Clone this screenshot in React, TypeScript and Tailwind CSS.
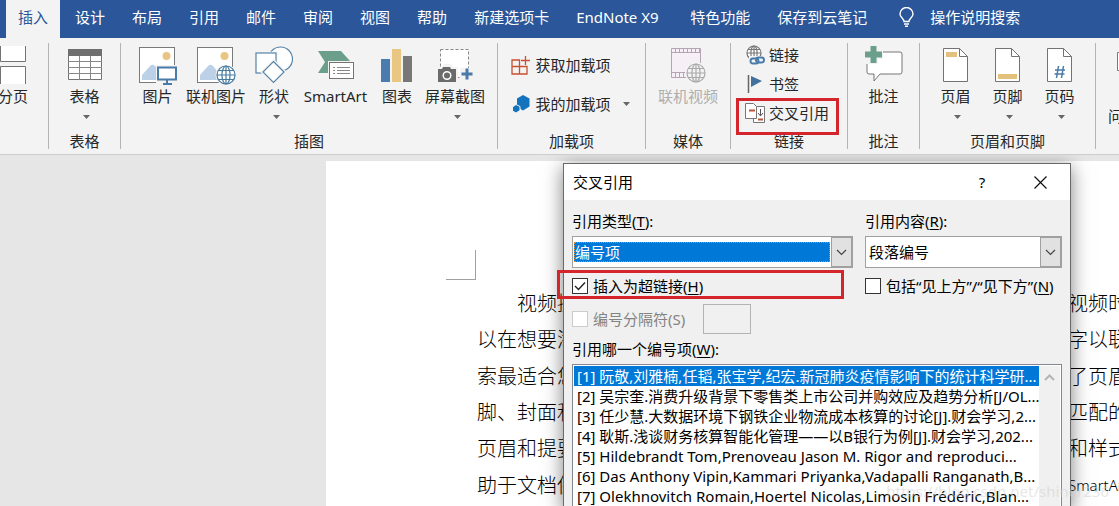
import type { ReactNode } from "react"

const tabs = ["设计", "布局", "引用", "邮件", "审阅", "视图", "帮助", "新建选项卡", "EndNote X9", "特色功能", "保存到云笔记"]

const entries = [
  "[1] 阮敬,刘雅楠,任韬,张宝学,纪宏.新冠肺炎疫情影响下的统计科学研...",
  "[2] 吴宗奎.消费升级背景下零售类上市公司并购效应及趋势分析[J/OL...",
  "[3] 任少慧.大数据环境下钢铁企业物流成本核算的讨论[J].财会学习,2...",
  "[4] 耿斯.浅谈财务核算智能化管理——以B银行为例[J].财会学习,202...",
  "[5] Hildebrandt Tom,Prenoveau Jason M. Rigor and reproduci...",
  "[6] Das Anthony Vipin,Kammari Priyanka,Vadapalli Ranganath,B...",
  "[7] Olekhnovitch Romain,Hoertel Nicolas,Limosin Frédéric,Blan...",
]

// Each line is split where the dialog covers it
const lines = [
  ["视频提", "视频时"],
  ["以在想要添", "字以联"],
  ["索最适合您", "了页眉"],
  ["脚、封面和", "匹配的"],
  ["页眉和提要", "和样式"],
  ["助于文档保", "SmartArt"],
]

function Caret() {
  return (
    <svg width="7" height="4" viewBox="0 0 7 4" className="shrink-0">
      <path d="M0 0h7L3.500 4z" fill="#666" />
    </svg>
  )
}

function Chevron({ up, color = "#444" }: { up?: boolean; color?: string }) {
  return (
    <svg width="11" height="7" viewBox="0 0 11 7" fill="none" stroke={color} strokeWidth={up ? 2 : 1.2}>
      <path d={up ? "M1 6l4.500-4.500L10 6" : "M1 1l4.500 4.500L10 1"} />
    </svg>
  )
}

function Group({ label, className, children }: { label: string; className: string; children: ReactNode }) {
  return (
    <section className={`flex shrink-0 flex-col justify-between border-r border-[#b4b4b4] ${className}`}>
      <div className="flex justify-center">{children}</div>
      <h2 className="text-center leading-4">{label}</h2>
    </section>
  )
}

function BigButton({ label, icon, caret, className = "" }: { label: string; icon: ReactNode; caret?: boolean; className?: string }) {
  return (
    <button className={`flex shrink-0 flex-col items-center whitespace-nowrap ${className}`}>
      <span className="flex h-11 items-center justify-center">{icon}</span>
      <span className="leading-[18px]">{label}</span>
      {caret && <span className="mt-2 flex h-2 items-center pl-1"><Caret /></span>}
    </button>
  )
}

function SmallButton({ label, icon, caret }: { label: string; icon: ReactNode; caret?: boolean }) {
  return (
    <button className="flex items-center gap-1 whitespace-nowrap leading-5">
      <span className="flex h-5 w-5 items-center justify-center">{icon}</span>
      {label}
      {caret && <span className="ml-2"><Caret /></span>}
    </button>
  )
}

function Globe({ x, y, r, color, fill = "#fff" }: { x: number; y: number; r: number; color: string; fill?: string }) {
  return (
    <g transform={`translate(${x} ${y})`} stroke={color} fill="none" strokeWidth="1.200">
      <circle r={r} fill={fill} />
      <ellipse rx={r * 0.45} ry={r} />
      <path d={`M0 ${-r}V${r}M${-r} 0H${r}M${-r * 0.85} ${-r * 0.5}H${r * 0.85}M${-r * 0.85} ${r * 0.5}H${r * 0.85}`} />
    </g>
  )
}

function Photo() {
  return (
    <>
      <rect x="1.500" y="2.500" width="35" height="35" fill="#fff" stroke="#7a7a7a" />
      <circle cx="28.500" cy="11" r="4" fill="#e8c583" />
      <path d="M4 35v-5l9-10q2-1 4 1l5 6v8z" fill="#bcd0e8" />
    </>
  )
}

function PictureIcon() {
  return (
    <svg width="40" height="40" viewBox="0 0 40 40">
      <Photo />
      <path d="M18 20h22v20H18z" fill="#f3f3f3" />
      <rect x="20" y="22.500" width="18" height="12" fill="#fff" stroke="#4a7ba8" strokeWidth="2" />
      <path d="M29 35v3M25 39h9" stroke="#4a7ba8" strokeWidth="2" />
    </svg>
  )
}

function OnlinePictureIcon() {
  return (
    <svg width="40" height="40" viewBox="0 0 40 40">
      <Photo />
      <circle cx="30" cy="30" r="10.500" fill="#f3f3f3" />
      <Globe x={30} y={30} r={9} color="#477a9f" />
    </svg>
  )
}

function ShapesIcon() {
  return (
    <svg width="38" height="38" viewBox="0 0 38 38" fill="#fff" stroke="#5683a8" strokeWidth="1.200">
      <circle cx="25.500" cy="13" r="12" />
      <path d="M1 7h20v20H1z" stroke="#f3f3f3" strokeWidth="3" />
      <rect x="1" y="7" width="20" height="20" />
      <path d="M18.500 15.500l10.500 10.500-10.500 10.500L8 26z" stroke="#f3f3f3" strokeWidth="4" />
      <path d="M18.500 15.500l10.500 10.500-10.500 10.500L8 26z" />
    </svg>
  )
}

function SmartArtIcon() {
  return (
    <svg width="38" height="30" viewBox="0 0 38 30">
      <path d="M1 1h23l9 10H12v12H1l7-11z" fill="#6b9f8c" />
      <path d="M11 11h27v19H11z" fill="#f3f3f3" />
      <rect x="12.500" y="12.500" width="24" height="16" fill="#fff" stroke="#737373" />
      <path d="M16 17.500h2M16 20.500h2M16 23.500h2M20 17.500h13M20 20.500h13M20 23.500h13" stroke="#888" />
    </svg>
  )
}

function ChartIcon() {
  return (
    <svg width="32" height="34" viewBox="0 0 32 34">
      <path d="M0 11h9v23H0z" fill="#4a7cad" />
      <path d="M11 1h9v33h-9z" fill="#e9c681" />
      <path d="M22 8h9v26h-9z" fill="#777" />
    </svg>
  )
}

function ScreenshotIcon() {
  return (
    <svg width="36" height="34" viewBox="0 0 36 34">
      <rect x="3.500" y="1.500" width="28" height="28" fill="#fff" stroke="#888" strokeDasharray="3 2" />
      <path d="M0 19h5l2-3h7l2 3h5v15H0z" fill="#f3f3f3" />
      <path d="M1 21h4l1-2h7l1 2h5v13H1z" fill="#6b6b6b" />
      <circle cx="10" cy="27.500" r="3.800" fill="#6b6b6b" stroke="#fff" strokeWidth="1.500" />
      <path d="M23 20h13v13H23z" fill="#f3f3f3" />
      <path d="M30 20.500v11M24.500 26h11" stroke="#4a7ba8" strokeWidth="3" />
    </svg>
  )
}

function TableIcon() {
  return (
    <svg width="34" height="32" viewBox="0 0 34 32">
      <path d="M.5.500h33v30H.500z" fill="#fff" stroke="#737373" />
      <path d="M0 0h34v7H0z" fill="#6f6f6f" />
      <path d="M0 12.500h34M0 18.500h34M0 24.500h34M11.500 7v24M22.500 7v24" stroke="#888" />
    </svg>
  )
}

function PageBreakIcon() {
  return (
    <svg width="28" height="38" viewBox="0 0 28 38" fill="#fff" stroke="#737373">
      <path d="M1.500 0v15.500h25V0M1.500 38V20.500h25V38" />
    </svg>
  )
}

function GetAddinsIcon() {
  return (
    <svg width="20" height="20" viewBox="0 0 20 20" fill="none" stroke="#c9502f" strokeWidth="1.300">
      <path d="M1 5h7.500v14H1zM8.500 11.500H16V19H1M1 11.500h7.500M14.500 1v9M10 5.500h9" />
    </svg>
  )
}

function MyAddinsIcon() {
  return (
    <svg width="18" height="18" viewBox="0 0 18 18" fill="#1473bd">
      <path d="M11 0l6.500 3.500v8L11 15.500l-6-3.500V3.500z" />
      <path d="M4 9.500l4 2v4l-4 2.500-3.500-2v-4z" stroke="#f3f3f3" strokeWidth="1" />
    </svg>
  )
}

function VideoIcon() {
  return (
    <svg width="36" height="36" viewBox="0 0 36 36">
      <path d="M1.500 1.500h29v29h-29z" fill="#f6eff6" stroke="#b3a5b3" />
      <path d="M1 5.500h29M1 25.500h29" stroke="#b3a5b3" />
      <path d="M5 3.500h26M5 28h26" stroke="#b3a5b3" strokeWidth="4" strokeDasharray="1 3" />
      <circle cx="26" cy="26" r="11" fill="#f3f3f3" />
      <Globe x={26} y={26} r={9} color="#aaa" fill="#f3f3f3" />
    </svg>
  )
}

function LinkIcon() {
  return (
    <svg width="20" height="20" viewBox="0 0 20 20">
      <Globe x={9} y={8} r={7} color="#777" />
      <path d="M4 11h16v9H4z" fill="#f3f3f3" />
      <g fill="none" stroke="#4a7ba8" strokeWidth="1.900">
        <rect x="5.500" y="13.500" width="8" height="5" rx="2.500" />
        <rect x="11" y="12.500" width="8" height="5" rx="2.500" />
      </g>
    </svg>
  )
}

function BookmarkIcon() {
  return (
    <svg width="16" height="18" viewBox="0 0 16 18">
      <path d="M1.500 0v18" stroke="#666" strokeWidth="1.500" />
      <path d="M4 1l11 5-11 6z" fill="#41719c" />
    </svg>
  )
}

function CrossRefIcon() {
  return (
    <svg width="20" height="20" viewBox="0 0 20 20" fill="#fff" stroke="#777">
      <path d="M9.500 3.500h10v16h-11v-4" />
      <path d="M.5.500h8l3 3v12H.500z" />
      <path d="M4 7.500h6M13 16.500h5" stroke="#b8573a" strokeWidth="2" />
      <path d="M15.500 6v7M13 10l2.500 3 2.500-3" fill="none" stroke="#555" />
    </svg>
  )
}

function CommentIcon() {
  return (
    <svg width="38" height="38" viewBox="0 0 38 38">
      <path d="M5 6h30q2 0 2 2v18q0 2-2 2H15l-6 7v-7H4q-2 0-2-2V8z" fill="#fff" stroke="#777" />
      <path d="M0 0h18v13h-5v5H0z" fill="#f3f3f3" />
      <path d="M8.500 0v17M0 8.500h17" stroke="#6b9f8c" strokeWidth="6" />
    </svg>
  )
}

function DocIcon({ children }: { children: ReactNode }) {
  return (
    <svg width="26" height="36" viewBox="0 0 26 36">
      <path d="M.5 1.500h16l8 8v25H.500z" fill="#fff" stroke="#737373" />
      <path d="M16.500 1.500v8h8" fill="none" stroke="#737373" />
      {children}
    </svg>
  )
}

function ComboBox({ id, value, selected }: { id: string; value: string; selected?: boolean }) {
  return (
    <div className="flex h-8 border border-[#a0a0a0] bg-white">
      <div className="flex min-w-0 flex-1 items-center p-px">
        <select
          id={id}
          className={`h-5 w-full appearance-none leading-[18px] outline-none ${selected ? "border border-dotted border-[#e08a30] bg-[#0078d7] text-white" : "bg-white pl-0.5"}`}
        >
          <option>{value}</option>
        </select>
      </div>
      <span className="flex w-[21px] items-center justify-center border border-[#a0a0a0] bg-[#e1e1e1]"><Chevron /></span>
    </div>
  )
}

function CheckBox({ label, hotkey, checked, disabled }: { label: string; hotkey: string; checked?: boolean; disabled?: boolean }) {
  return (
    <label className={`flex items-center gap-[5px] whitespace-nowrap leading-5 ${disabled ? "text-[#838383]" : ""}`}>
      <span className="grid">
        <input
          type="checkbox"
          defaultChecked={checked}
          disabled={disabled}
          className={`col-start-1 row-start-1 h-4 w-4 appearance-none border bg-white ${disabled ? "border-[#ccc]" : "border-[#333]"}`}
        />
        {checked && (
          <svg width="16" height="16" viewBox="0 0 16 16" fill="none" stroke="#222" strokeWidth="1.400" className="pointer-events-none col-start-1 row-start-1">
            <path d="M3 8l3.500 3.500L13 4.500" />
          </svg>
        )}
      </span>
      <span>{label}({disabled ? hotkey : <u className="underline-offset-2">{hotkey}</u>})</span>
    </label>
  )
}

function Ribbon() {
  return (
    <div className="flex h-[117px] shrink-0 border-b border-[#cdcdcd] bg-[#f3f3f3] pt-[5px] pb-[5px]">
      <Group label="" className="w-[49px]">
        <BigButton label="分页" icon={<PageBreakIcon />} className="mr-[22px]" />
      </Group>
      <Group label="表格" className="w-[72px]">
        <BigButton label="表格" icon={<TableIcon />} caret />
      </Group>
      <Group label="插图" className="w-[377px]">
        <BigButton label="图片" icon={<PictureIcon />} className="w-[57px]" />
        <BigButton label="联机图片" icon={<OnlinePictureIcon />} className="w-[60px]" />
        <BigButton label="形状" icon={<ShapesIcon />} caret className="w-[56px]" />
        <BigButton label="SmartArt" icon={<SmartArtIcon />} className="w-[67px]" />
        <BigButton label="图表" icon={<ChartIcon />} className="w-[56px]" />
        <BigButton label="屏幕截图" icon={<ScreenshotIcon />} caret className="mr-1 w-[60px]" />
      </Group>
      <Group label="加载项" className="w-[148px]">
        <div className="flex flex-col gap-[19px] pt-3 pr-0.5">
          <SmallButton label="获取加载项" icon={<GetAddinsIcon />} />
          <SmallButton label="我的加载项" icon={<MyAddinsIcon />} caret />
        </div>
      </Group>
      <Group label="媒体" className="w-[85px]">
        <BigButton label="联机视频" icon={<VideoIcon />} className="text-[#aeaeae]" />
      </Group>
      <Group label="链接" className="w-[117px]">
        <div className="relative flex flex-col gap-[9px] pt-0.5 pr-1">
          <SmallButton label="链接" icon={<LinkIcon />} />
          <SmallButton label="书签" icon={<BookmarkIcon />} />
          <SmallButton label="交叉引用" icon={<CrossRefIcon />} />
          <div className="pointer-events-none absolute -right-1.5 -bottom-3 h-[37px] w-[103px] border-[3px] border-[#d4242c]" />
        </div>
      </Group>
      <Group label="批注" className="w-[72px]">
        <BigButton label="批注" icon={<CommentIcon />} />
      </Group>
      <Group label="页眉和页脚" className="w-[176px]">
        <BigButton label="页眉" caret className="w-[52px]" icon={<DocIcon><path d="M3 5h11v5H3z" fill="#e3c07c" /></DocIcon>} />
        <BigButton label="页脚" caret className="w-[52px]" icon={<DocIcon><path d="M3 27h19v5H3z" fill="#e3c07c" /></DocIcon>} />
        <BigButton
          label="页码"
          caret
          className="w-[52px]"
          icon={<DocIcon><path d="M11.500 19l-2 12M16.500 19l-2 12M8 23h10M7.500 27h10" stroke="#4a7ba8" strokeWidth="1.500" /></DocIcon>}
        />
      </Group>
      <button className="flex shrink-0 flex-col items-start pl-3">
        <svg width="30" height="44" viewBox="0 0 30 44" className="ml-2">
          <path d="M1.500 9.500h27v18h-27z" fill="#fff" stroke="#777" />
        </svg>
        <span className="mt-5 leading-[18px]">问</span>
      </button>
    </div>
  )
}

function CrossReferenceDialog() {
  return (
    <div role="dialog" aria-label="交叉引用" className="absolute top-2 left-[563px] w-[508px] border border-[#6a6a6a] bg-[#f0f0f0] text-black shadow-[0_4px_18px_rgba(0,0,0,0.5)]">
      <header className="flex h-9 items-center bg-white pl-[9px]">
        <h1 className="flex-1">交叉引用</h1>
        <button aria-label="帮助" className="w-[56px] text-center">?</button>
        <button aria-label="关闭" className="flex w-[60px] justify-center">
          <svg width="13" height="13" viewBox="0 0 13 13" stroke="#111" strokeWidth="1.200"><path d="M.5.500l12 12M12.500.500l-12 12" /></svg>
        </button>
      </header>
      <div className="px-2 pt-[11px]">
        <div className="grid grid-cols-[281px_197px] gap-x-3">
          <label htmlFor="refType" className="mb-[5px] leading-5">引用类型(<u className="underline-offset-2">T</u>):</label>
          <label htmlFor="refContent" className="mb-[5px] leading-5">引用内容(<u className="underline-offset-2">R</u>):</label>
          <ComboBox id="refType" value="编号项" selected />
          <ComboBox id="refContent" value="段落编号" />
          <div className="relative pt-2">
            <CheckBox label="插入为超链接" hotkey="H" checked />
            <div className="pointer-events-none absolute top-0.5 -left-[15px] h-[29px] w-[287px] border-[3px] border-[#d4242c]" />
          </div>
          <div className="pt-2"><CheckBox label={"包括“见上方”/“见下方”"} hotkey="N" /></div>
        </div>
        <div className="mt-2 flex items-center gap-[18px]">
          <CheckBox label="编号分隔符" hotkey="S" disabled />
          <input aria-label="编号分隔符" disabled className="h-[30px] w-12 border border-[#b4b4b4] bg-[#f0f0f0]" />
        </div>
        <p id="itemsLabel" className="mt-[5px] leading-5">引用哪一个编号项(<u className="underline-offset-2">W</u>):</p>
        <div className="mt-[5px] flex w-[490px] border border-[#828790] bg-white p-px">
          <ul role="listbox" aria-labelledby="itemsLabel" className="min-w-0 flex-1">
            {entries.map((entry, i) => (
              <li key={entry} role="option" aria-selected={i === 0} className={`h-5 overflow-hidden pl-[3px] leading-5 whitespace-nowrap ${i === 0 ? "bg-[#0078d7] text-white" : ""}`}>
                {entry}
              </li>
            ))}
          </ul>
          <div className="flex w-[21px] justify-center bg-[#f0f0f0] pt-2"><Chevron up color="#b5b5b5" /></div>
        </div>
      </div>
    </div>
  )
}

export default function App() {
  return (
    <div className="flex h-screen flex-col overflow-hidden bg-[#e6e6e6] font-['Noto_Sans','Noto_Sans_CJK_SC',sans-serif] text-[15px] text-[#262626]">
      <nav className="flex h-[38px] shrink-0 items-center bg-[#2b579a] pl-1.5 whitespace-nowrap text-white">
        <button className="mr-3.5 h-full bg-[#f3f3f3] px-3 pb-1 text-[#2b579a]">插入</button>
        <div className="flex gap-[27px] pb-1 pl-px">
          {tabs.map((tab) => <button key={tab} className={tab === "EndNote X9" ? "w-[87px] text-left" : ""}>{tab}</button>)}
        </div>
        <button className="ml-8 flex items-center gap-4 pb-1">
          <svg width="15" height="20" viewBox="0 0 15 20" fill="none" stroke="#fff" strokeWidth="1.400">
            <path d="M5 14.500c0-3-4-4-4-7.500a6.500 6.500 0 0 1 13 0c0 3.500-4 4.500-4 7.500zM5 17h5M6 19.300h3" />
          </svg>
          操作说明搜索
        </button>
      </nav>

      <Ribbon />

      <main className="relative flex-1 overflow-hidden pt-1.5 pl-[326px]">
        <article className="h-full bg-white pt-[89px] font-['Noto_Sans_CJK_SC',sans-serif] text-xl font-light text-black">
          <div className="ml-[120px] h-[30px] w-[30px] border-r border-b border-[#a0a0a0]" />
          <div className="mt-[5px] ml-[151px] grid h-[218px] grid-rows-6">
            {lines.map(([start, end], i) => (
              <p key={start} className="flex items-center leading-9 whitespace-nowrap">
                <span className={i === 0 ? "w-[591px] shrink-0 pl-10" : "w-[591px] shrink-0"}>{start}</span>
                <span className={end === "SmartArt" ? "font-['Noto_Sans'] text-[15px]" : ""}>{end}</span>
              </p>
            ))}
          </div>
        </article>
        <CrossReferenceDialog />
        <p className="absolute right-2.5 bottom-1 text-[#d0d0d0] opacity-50">https://blog.csdn.net/shiner236</p>
      </main>
    </div>
  )
}
